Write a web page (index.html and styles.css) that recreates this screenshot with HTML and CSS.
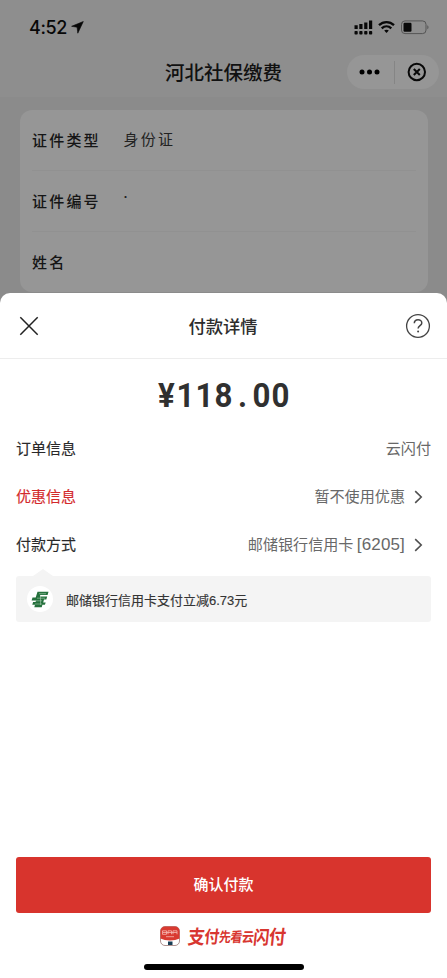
FILE: index.html
```html
<!DOCTYPE html>
<html lang="zh-CN">
<head>
<meta charset="utf-8">
<title>付款详情</title>
<link rel="stylesheet" href="styles.css">
</head>
<body>
<div class="screen">
  <header class="top">
    <div class="status">
      <div class="clock"><span>4:52</span>
        <svg width="13" height="13" viewBox="0 0 13 13"><path d="M12.3.5.6 5.300l5.500.9.7 6z" fill="#080808" stroke="#080808" stroke-width=".6"/></svg>
      </div>
      <svg class="signals" width="76" height="16" viewBox="0 0 76 16">
        <g fill="#080808">
          <path d="M.5 5.300h3.200V9H.5zM5.300 4h3.200v5H5.300zM10.200 2.500h3.200V9h-3.200zM15 .5h3.200V9H15z"/>
          <rect x=".5" y="11" width="3.200" height="3.500" rx=".8"/><rect x="5.300" y="11" width="3.200" height="3.500" rx=".8"/><rect x="10.200" y="11" width="3.200" height="3.500" rx=".8"/><rect x="15" y="11" width="3.200" height="3.500" rx=".8"/>
          <path d="M32.500 9.700c-.9 0-1.700.4-2.300.9l2.300 2.500 2.300-2.500c-.6-.5-1.400-.9-2.300-.9z"/>
          <rect x="49.500" y="2.800" width="8" height="9" rx="1.200"/>
        </g>
        <path d="M25 5.200c4.300-4.100 10.700-4.100 15 0M27.700 8.300c2.800-2.600 6.800-2.600 9.600 0" fill="none" stroke="#080808" stroke-width="2.300"/>
        <rect x="47.500" y=".9" width="24.500" height="12.700" rx="3.500" fill="none" stroke="#555"/>
        <path d="M73.300 5.200c1.600.7 1.600 3.400 0 4.100z" fill="#555"/>
      </svg>
    </div>
    <div class="nav">
      <h1>河北社保缴费</h1>
      <div class="capsule">
        <svg width="22" height="6" viewBox="0 0 22 6"><circle cx="3" cy="3" r="2.500"/><circle cx="10.500" cy="3" r="2.500"/><circle cx="18" cy="3" r="2.500"/></svg>
        <i class="split"></i>
        <svg width="20" height="20" viewBox="0 0 20 20" fill="none" stroke="#080808" stroke-width="2"><circle cx="9.800" cy="10" r="8.200"/><path d="m6.800 7 6 6m0-6-6 6"/></svg>
      </div>
    </div>
  </header>
  <section class="card">
    <div class="field"><b>证件类型</b><span>身份证</span></div>
    <div class="field"><b>证件编号</b><span class="dot">·</span></div>
    <div class="field"><b>姓名</b></div>
  </section>
  <main class="sheet">
    <div class="sheet-head">
      <svg width="20" height="20" viewBox="0 0 20 20" fill="none" stroke="#222" stroke-width="1.500"><path d="m1.300 1.300 17.400 17.400m0-17.400L1.300 18.700"/></svg>
      <h2>付款详情</h2>
      <svg width="26" height="26" viewBox="0 0 26 26" fill="none" stroke="#444" stroke-width="1.300"><circle cx="13" cy="13" r="11.400"/><path d="M9.300 10.300c0-4.800 7.500-4.700 7.500-.4 0 2.600-3.700 2.800-3.700 5.600" stroke-width="1.500"/><circle cx="13.100" cy="18.500" r="1" fill="#444" stroke="none"/></svg>
    </div>
    <div class="amount"><span>¥</span><span>1</span><span>1</span><span>8</span><span>.</span><span>0</span><span>0</span></div>
    <div class="row"><span class="label">订单信息</span><span class="value">云闪付</span></div>
    <div class="row promo"><span class="label">优惠信息</span><span class="value">暂不使用优惠</span>
      <svg class="chev" width="9" height="14" viewBox="0 0 9 14"><path d="m1.200 1.200 6 5.800-6 5.800"/></svg></div>
    <div class="row"><span class="label">付款方式</span><span class="value">邮储银行信用卡 <em>[6205]</em></span>
      <svg class="chev" width="9" height="14" viewBox="0 0 9 14"><path d="m1.200 1.200 6 5.800-6 5.800"/></svg></div>
    <div class="tip">
      <div class="bank"><svg width="18" height="17" viewBox="0 0 18 17"><path d="M6.500.8h11L16.600 4H9.300l-.4 1.500h7.300l-.9 3H13l-.8 3h2.500l-.8 2.200h-2.500l-.7 2.500H3.300l.7-2.500H1.300l.8-2.600h2.500l.4-1.500H.6l.9-3.200h3.200z" fill="#25713d"/><path d="M8 2.700h7M6 7.200h8M5 9.800h6M4 13h7M9.500 5v9" stroke="#a6cbae" stroke-width=".6"/></svg></div>
      <span class="tip-text">邮储银行信用卡支付立减6.73元</span>
    </div>
    <button class="pay">确认付款</button>
    <div class="brand">
      <svg width="20" height="20" viewBox="0 0 20 20"><rect x=".5" y=".5" width="19" height="19" rx="4.500" fill="#fff" stroke="#9b7773" stroke-width=".8"/><path d="M.5 12.500V5A4.500 4.500 0 0 1 5 .5h10A4.500 4.500 0 0 1 19.500 5v7.500c-5 2.600-14 2.600-19 0z" fill="#d93a31"/><path d="M2.500 4.800h4v3.500h-4zM8 8.300V4.800h3.500v3.500M13 8.300V4.800h4v3.500M3 6.500h14M6 10.700h8" fill="none" stroke="#f5b9b2" stroke-width=".8"/><path d="M8 15.500h4.500V19H8z" fill="#173d55"/></svg>
      <div class="slogan"><span class="big">支</span><span>付</span><span class="small">先</span><span class="small">看</span><span class="small">云</span><span class="tall">闪</span><span class="big">付</span></div>
    </div>
    <div class="home"></div>
  </main>
</div>
</body>
</html>
```
FILE: styles.css
```css
* { box-sizing: border-box; }
body { margin: 0; font-family: "Noto Sans CJK SC", sans-serif; }
h1, h2 { margin: 0; }
svg { display: block; flex: none; }
.screen { width: 447px; height: 978px; overflow: hidden; display: flex; flex-direction: column; background: #8b8b8b; }
.top { height: 97px; flex: none; background: #8e8e8e; }
.status { height: 54px; padding: 1px 17.500px 0 29px; display: flex; align-items: center; justify-content: space-between; }
.clock { display: flex; align-items: center; gap: 4px; font: 500 18px/20px Inter, sans-serif; letter-spacing: -.4px; color: #080808; }
.nav { height: 36px; display: grid; grid-template-columns: 1fr auto 1fr; align-items: center; padding-right: 8px; padding-left: 8px; }
.nav h1 { grid-column: 2; font-size: 19.500px; line-height: 28px; font-weight: 500; color: #111; }
.capsule { justify-self: end; width: 92px; height: 34px; border-radius: 17px; background: #969696; display: flex; align-items: center; padding: 0 12px; justify-content: space-between; }
.split { width: 1px; height: 23px; background: #858585; }
.card { height: 182px; margin: 13px 19px 1px 20px; padding: 0 12px; background: #969696; border-radius: 12px; flex: none; }
.field { height: 61px; display: flex; align-items: center; border-bottom: 1px solid #919191; font-size: 15px; letter-spacing: 2.200px; color: #222; padding-bottom: 2px; }
.field:last-child { border: 0; }
.field b { width: 91.500px; font-weight: 500; color: #151515; }
.field span { position: relative; top: -1px; }
.field .dot { top: -4px; left: -3px; font-size: 10px; }
.sheet { flex: 1; background: #fff; border-radius: 10px 10px 0 0; display: flex; flex-direction: column; padding: 0 16px; }
.sheet-head { height: 66px; margin: 0 -16px; padding: 0 16px 0 19px; border-bottom: 1px solid #ededed; display: flex; align-items: center; justify-content: space-between; flex: none; }
.sheet-head h2 { font-size: 17.300px; font-weight: 500; line-height: 26px; color: #2d2d2d; padding-left: 2px; }
.amount { height: 66px; padding-top: 5px; display: flex; justify-content: center; align-items: center; font: 700 34px/44px Roboto, sans-serif; color: #303030; }
.amount span { width: 19px; display: flex; justify-content: center; transform: scaleX(.92); }
.row { height: 48px; display: flex; align-items: center; font-size: 15px; color: #292929; }
.label, .value { padding-bottom: 3px; }
.label { flex: 1; -webkit-text-stroke: .15px currentColor; }
.value { color: #686868; font-size: 15.100px; line-height: 22px; padding-bottom: 4px; }
.value em { font: 17px/20px "Liberation Sans", sans-serif; letter-spacing: .15px; }
.promo .label { color: #d3292b; }
.chev { margin: 0 8px 0 9px; fill: none; stroke: #505050; stroke-width: 1.600; }
.tip { position: relative; height: 46px; margin-top: 7px; padding-left: 11px; border-radius: 3px; background: #f4f4f4; display: flex; align-items: center; gap: 13px; font-size: 13px; color: #343434; -webkit-text-stroke: .15px currentColor; }
.tip::before { content: ""; position: absolute; left: 17px; top: -7px; border: 10px solid transparent; border-top: 0; border-bottom: 7px solid #f4f4f4; }
.tip-text { font-family: "Liberation Sans", "Noto Sans CJK SC", sans-serif; }
.bank { width: 26px; height: 26px; border-radius: 50%; background: #fff; display: flex; align-items: center; justify-content: center; }
.pay { margin: auto 0 0; height: 56px; padding: 0 0 3px; flex: none; border: 0; border-radius: 3px; background: #d8342d; color: #fff; font: 500 15px "Noto Sans CJK SC", sans-serif; }
.brand { height: 46px; display: flex; align-items: center; justify-content: center; gap: 8px; padding-right: 2px; }
.slogan { display: flex; align-items: center; font-size: 15px; line-height: 24px; font-weight: 700; color: #d83630; transform: skewX(-6deg) scaleY(1.150); }
.slogan .small { font-size: 12px; }
.slogan .tall { font-size: 16px; }
.slogan .big { font-size: 17px; }
.slogan span { margin-right: -.5px; }
.home { width: 160px; height: 6px; margin: 5px auto 8px; border-radius: 3px; background: #000; flex: none; }
```
